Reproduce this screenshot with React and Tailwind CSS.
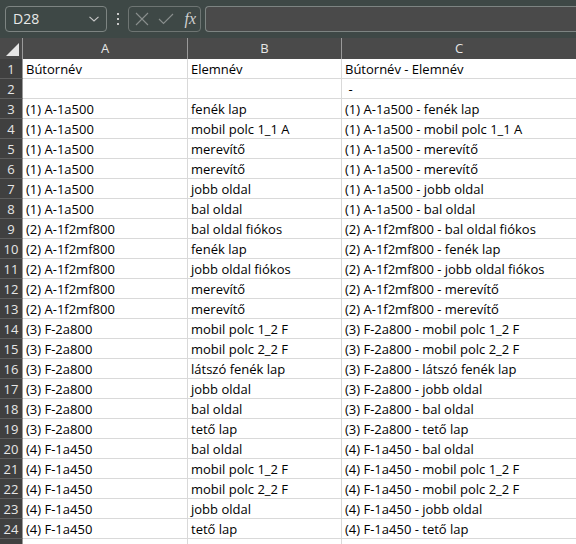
const rows = [
  ['Bútornév', 'Elemnév', 'Bútornév - Elemnév'],
  ['', '', ' -'],
  ['(1) A-1a500', 'fenék lap'],
  ['(1) A-1a500', 'mobil polc 1_1 A'],
  ['(1) A-1a500', 'merevítő'],
  ['(1) A-1a500', 'merevítő'],
  ['(1) A-1a500', 'jobb oldal'],
  ['(1) A-1a500', 'bal oldal'],
  ['(2) A-1f2mf800', 'bal oldal fiókos'],
  ['(2) A-1f2mf800', 'fenék lap'],
  ['(2) A-1f2mf800', 'jobb oldal fiókos'],
  ['(2) A-1f2mf800', 'merevítő'],
  ['(2) A-1f2mf800', 'merevítő'],
  ['(3) F-2a800', 'mobil polc 1_2 F'],
  ['(3) F-2a800', 'mobil polc 2_2 F'],
  ['(3) F-2a800', 'látszó fenék lap'],
  ['(3) F-2a800', 'jobb oldal'],
  ['(3) F-2a800', 'bal oldal'],
  ['(3) F-2a800', 'tető lap'],
  ['(4) F-1a450', 'bal oldal'],
  ['(4) F-1a450', 'mobil polc 1_2 F'],
  ['(4) F-1a450', 'mobil polc 2_2 F'],
  ['(4) F-1a450', 'jobb oldal'],
  ['(4) F-1a450', 'tető lap'],
]

const cols = 'grid grid-cols-[23px_165px_154px_1fr]'

function Toolbar() {
  return (
    <div className="h-[38px] bg-[#3e4846] flex items-start pt-[6px] pl-[5px] gap-0">
      <div className="w-[102px] h-[26px] rounded-[4px] border border-[#7d8482] flex items-center justify-between pl-[7px] pr-[6px]">
        <span className="text-[14px] text-[#e8e8e8] leading-none">D28</span>
        <svg width="12" height="8" viewBox="0 0 12 8" fill="none" stroke="#c8c8c8" strokeWidth="1.1">
          <path d="M1.5 1.8 L6 6 L10.5 1.8" />
        </svg>
      </div>
      <div className="w-[21px] h-[26px] flex flex-col items-center justify-center gap-[3px]">
        <span className="w-[2px] h-[2px] bg-[#c8c8c8]" />
        <span className="w-[2px] h-[2px] bg-[#c8c8c8]" />
        <span className="w-[2px] h-[2px] bg-[#c8c8c8]" />
      </div>
      <div className="w-[73px] h-[26px] rounded-[4px] border border-[#6e7573] flex items-center pl-[6px] pr-[4px]">
        <svg width="14" height="14" viewBox="0 0 14 14" fill="none" stroke="#8a8f8e" strokeWidth="1.1">
          <path d="M1 1 L13 13 M13 1 L1 13" />
        </svg>
        <svg className="ml-[9px]" width="16" height="12" viewBox="0 0 16 12" fill="none" stroke="#8a8f8e" strokeWidth="1.1">
          <path d="M1 6 L5.5 10.5 L15 1" />
        </svg>
        <span className="ml-auto text-[16px] italic text-[#d0d0d0] font-['Liberation_Serif',serif] leading-none">fx</span>
      </div>
      <div className="ml-[4px] flex-1 h-[26px] rounded-l-[4px] border border-r-0 border-[#7d8482] bg-[#4a4a4a]" />
    </div>
  )
}

export default function App() {
  return (
    <div className="w-[576px] h-[544px] overflow-hidden bg-white font-['Open_Sans','Liberation_Sans',sans-serif]">
      <Toolbar />
      <div className={`${cols} h-[21px] bg-[#4a4a4a] text-[#e6e6e6] text-[13px]`}>
        <div className="relative border-r border-[#9a9a9a]">
          <svg className="absolute right-[3px] bottom-[3px]" width="13" height="13" viewBox="0 0 13 13">
            <path d="M13 0 L13 13 L0 13 Z" fill="#e6e6e6" />
          </svg>
        </div>
        <div className="flex items-center justify-center border-r border-[#9a9a9a] pt-[1px]">A</div>
        <div className="flex items-center justify-center border-r border-[#9a9a9a] pt-[1px]">B</div>
        <div className="flex items-center justify-center pt-[1px]">C</div>
      </div>
      {rows.map((r, i) => {
        const c = r.length > 2 ? r[2] : `${r[0]} - ${r[1]}`
        return (
          <div key={i} className={`${cols} h-[20px] text-[13px] text-black leading-none`}>
            <div className="bg-[#404040] text-[#e6e6e6] flex items-center justify-center border-b border-[#5e5e5e] border-r border-r-[#9a9a9a] pt-[1px]">{i + 1}</div>
            <div className="flex items-center pl-[3px] border-r border-b border-[#d9d9d9] pt-[1px] whitespace-pre">{r[0]}</div>
            <div className="flex items-center pl-[3px] border-r border-b border-[#d9d9d9] pt-[1px] whitespace-pre">{r[1]}</div>
            <div className="flex items-center pl-[3px] border-b border-[#d9d9d9] pt-[1px] whitespace-pre">{c}</div>
          </div>
        )
      })}
      <div className={`${cols} h-[20px]`}>
        <div className="bg-[#404040] border-r border-[#9a9a9a]" />
        <div className="border-r border-[#d9d9d9]" />
        <div className="border-r border-[#d9d9d9]" />
        <div />
      </div>
    </div>
  )
}
